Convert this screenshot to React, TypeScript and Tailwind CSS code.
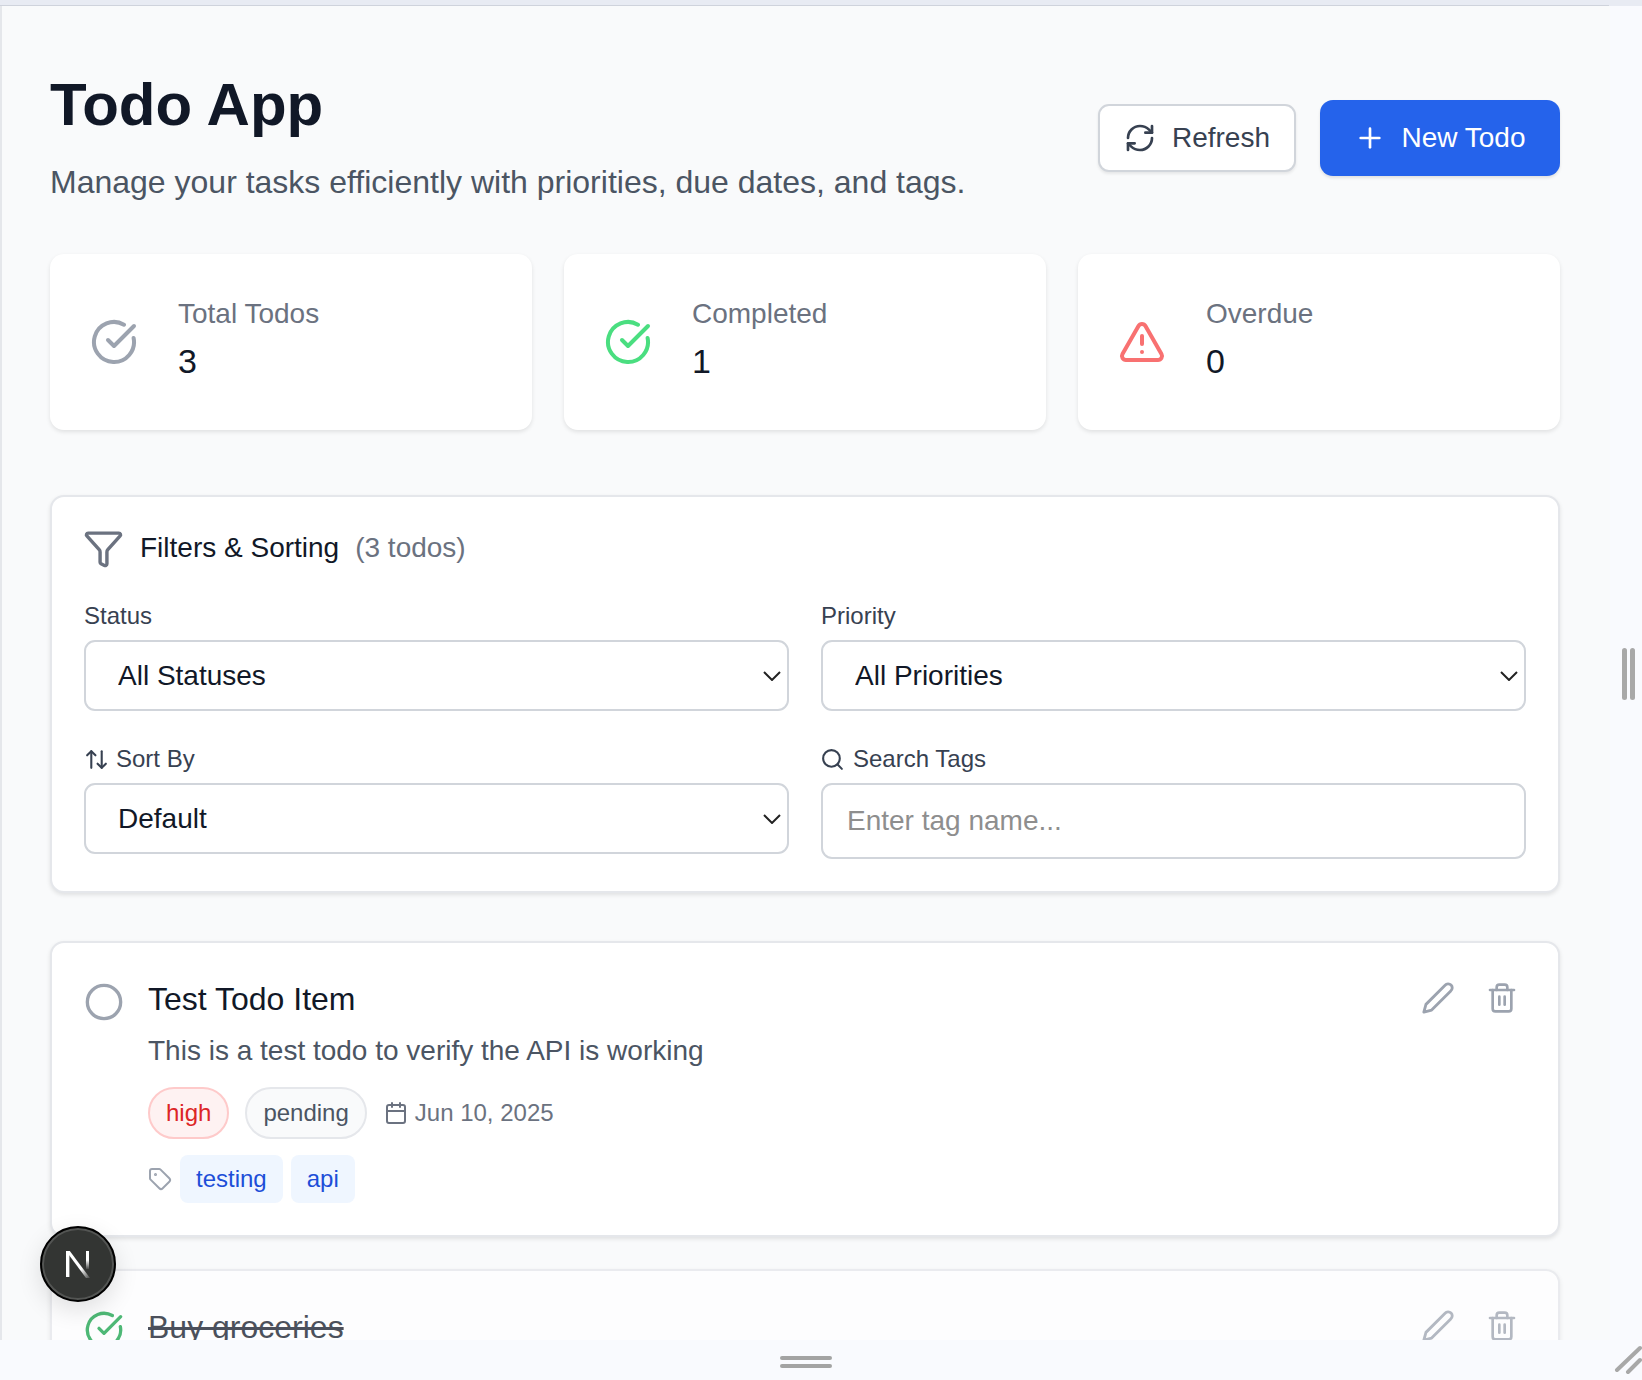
import { AlertTriangle, ArrowUpDown, Calendar, CheckCircle, Circle, Filter, Plus, RefreshCw, Search, Tag, Trash2 } from 'lucide-react';

const font = { fontFamily: '"Liberation Sans", Arial, sans-serif' };

function PencilIcon({ className }: { className?: string }) {
  return (
    <svg viewBox="0 0 24 24" fill="none" stroke="currentColor" strokeWidth="2" strokeLinecap="round" strokeLinejoin="round" className={className}>
      <path d="M17 3a2.85 2.83 0 1 1 4 4L7.5 20.5 2 22l1.5-5.5Z" />
    </svg>
  );
}

function RowActions() {
  return (
    <div className="mt-[3px] flex items-center gap-[31px] self-start">
      <PencilIcon className="h-[34px] w-[34px] text-[#9ca3af]" />
      <Trash2 className="h-[32px] w-[32px] text-[#9ca3af]" />
    </div>
  );
}

function StatCard({ icon, label, value }: { icon: React.ReactNode; label: string; value: string }) {
  return (
    <div className="flex h-[176px] items-center gap-[40px] rounded-[14px] bg-white pl-[40px] shadow-[0_2px_4px_rgba(0,0,0,0.1)]">
      {icon}
      <div className="pb-[4px]">
        <p className="text-[28px] leading-[36px] text-[#6b7280]">{label}</p>
        <p className="mt-[5px] text-[34px] leading-[48px] text-[#111827]">{value}</p>
      </div>
    </div>
  );
}

function SelectField({ label, value, icon }: { label: string; value: string; icon?: React.ReactNode }) {
  return (
    <div>
      <label className="mb-[8px] flex h-[32px] items-center gap-[7px] text-[24px] leading-[32px] text-[#374151]">
        {icon}
        {label}
      </label>
      <div className="relative">
        <select className="h-[71px] w-full appearance-none rounded-[11px] border-2 border-[#d1d5db] bg-white pl-[32px] text-[28px] text-[#111827] outline-none">
          <option>{value}</option>
        </select>
        <svg viewBox="0 0 18 10" fill="none" stroke="#222222" strokeWidth="2" className="pointer-events-none absolute top-[31px] right-[8px] h-[10px] w-[18px]">
          <path d="M1 1l8 8 8-8" />
        </svg>
      </div>
    </div>
  );
}

function TodoCard() {
  return (
    <div className="flex rounded-[14px] border-2 border-[#e5e7eb] bg-white pt-[35px] pr-[40px] pb-[32px] pl-[32px] shadow-[0_2px_4px_rgba(0,0,0,0.1)]">
      <Circle className="mt-[4px] h-[40px] w-[40px] shrink-0 text-[#9ca3af]" />
      <div className="ml-[24px] flex-1">
        <h3 className="text-[32px] leading-[42px] text-[#111827]">Test Todo Item</h3>
        <p className="mt-[12px] text-[28px] leading-[38px] text-[#4b5563]">This is a test todo to verify the API is working</p>
        <div className="mt-[17px] flex items-center">
          <span className="flex h-[52px] items-center rounded-full border-2 border-[#fecaca] bg-[#fef2f2] px-[16px] text-[24px] text-[#dc2626]">high</span>
          <span className="ml-[16px] flex h-[52px] items-center rounded-full border-2 border-[#e5e7eb] bg-[#f9fafb] px-[16px] text-[24px] text-[#4b5563]">pending</span>
          <Calendar className="ml-[17px] h-[24px] w-[24px] text-[#6b7280]" />
          <span className="ml-[7px] text-[24px] text-[#6b7280]">Jun 10, 2025</span>
        </div>
        <div className="mt-[16px] flex items-center">
          <Tag className="h-[24px] w-[24px] text-[#9ca3af]" />
          <span className="ml-[8px] flex h-[48px] items-center rounded-[8px] bg-[#eff6ff] px-[16px] text-[24px] text-[#1d4ed8]">testing</span>
          <span className="ml-[8px] flex h-[48px] items-center rounded-[8px] bg-[#eff6ff] px-[16px] text-[24px] text-[#1d4ed8]">api</span>
        </div>
      </div>
      <RowActions />
    </div>
  );
}

function DoneCard() {
  return (
    <div className="mt-[32px] flex h-[200px] rounded-[14px] border-2 border-[#e5e7eb] bg-white pt-[35px] pr-[40px] pl-[32px] opacity-75 shadow-[0_2px_4px_rgba(0,0,0,0.1)]">
      <CheckCircle className="mt-[4px] h-[40px] w-[40px] shrink-0 text-[#16a34a]" />
      <div className="ml-[24px] flex-1">
        <h3 className="text-[32px] leading-[42px] text-[#111827] line-through">Buy groceries</h3>
      </div>
      <RowActions />
    </div>
  );
}

export default function App() {
  return (
    <div className="relative flex h-[1380px] w-[1642px] flex-col overflow-hidden bg-[#f9fafe]" style={font}>
      {/* browser chrome strip */}
      <div className="h-[6px] shrink-0 bg-[#e8ebf3]">
        <div className="h-[6px] w-[1609px] border-b border-[#cfd3dc]" />
      </div>

      <div className="flex min-h-0 flex-1">
        <main className="h-full w-[1610px] shrink-0 overflow-hidden border-l-2 border-[#e5e7eb] bg-[#f9fafb] pt-[66px] pl-[48px]">
          <div className="w-[1510px]">
            {/* header */}
            <div className="flex items-center justify-between">
              <div>
                <h1 className="text-[60px] leading-[66px] font-bold text-[#111827]">Todo App</h1>
                <p className="mt-[24px] pb-[1px] text-[32px] leading-[40px] text-[#4b5563]">Manage your tasks efficiently with priorities, due dates, and tags.</p>
              </div>
              <div className="flex items-center gap-[24px]">
                <button className="flex h-[68px] w-[198px] items-center justify-center gap-[16px] rounded-[11px] border-2 border-[#d1d5db] bg-white text-[28px] text-[#374151] shadow-[0_2px_3px_rgba(0,0,0,0.08)]">
                  <RefreshCw className="h-[32px] w-[32px]" />
                  Refresh
                </button>
                <button className="flex h-[76px] w-[240px] items-center justify-center gap-[15px] rounded-[13px] bg-[#2563eb] text-[28px] text-white shadow-[0_2px_3px_rgba(0,0,0,0.1)]">
                  <Plus className="h-[32px] w-[32px]" />
                  New Todo
                </button>
              </div>
            </div>

            {/* stats */}
            <div className="mt-[51px] grid grid-cols-3 gap-[32px]">
              <StatCard icon={<CheckCircle className="h-[48px] w-[48px] text-[#9ca3af]" />} label="Total Todos" value="3" />
              <StatCard icon={<CheckCircle className="h-[48px] w-[48px] text-[#4ade80]" />} label="Completed" value="1" />
              <StatCard icon={<AlertTriangle className="h-[48px] w-[48px] text-[#f87171]" />} label="Overdue" value="0" />
            </div>

            {/* filters */}
            <section className="mt-[65px] rounded-[14px] border-2 border-[#e5e7eb] bg-white px-[32px] pt-[29px] pb-[32px] shadow-[0_2px_4px_rgba(0,0,0,0.1)]">
              <div className="flex h-[44px] items-center">
                <Filter className="-ml-[1px] h-[41px] w-[41px] text-[#6b7280]" />
                <h2 className="ml-[16px] text-[28px] text-[#111827]">Filters &amp; Sorting</h2>
                <span className="ml-[16px] text-[28px] text-[#6b7280]">(3 todos)</span>
              </div>
              <div className="mt-[30px] grid grid-cols-2 items-start gap-x-[32px] gap-y-[32px]">
                <SelectField label="Status" value="All Statuses" />
                <SelectField label="Priority" value="All Priorities" />
                <SelectField label="Sort By" value="Default" icon={<ArrowUpDown className="h-[25px] w-[25px]" />} />
                <div>
                  <label className="mb-[8px] flex h-[32px] items-center gap-[8px] text-[24px] leading-[32px] text-[#374151]">
                    <Search className="-ml-[1px] h-[25px] w-[25px]" />
                    Search Tags
                  </label>
                  <input
                    placeholder="Enter tag name..."
                    className="h-[76px] w-full rounded-[11px] border-2 border-[#d1d5db] bg-white pl-[24px] text-[28px] outline-none placeholder:text-[#8e8e8e]"
                  />
                </div>
              </div>
            </section>

            {/* todos */}
            <div className="mt-[48px]">
              <TodoCard />
              <DoneCard />
            </div>
          </div>
        </main>

        {/* side resize handle */}
        <div className="flex flex-1 items-start justify-center pt-[642px] pl-[4px]">
          <div className="flex gap-[3px]">
            <div className="h-[52px] w-[5px] rounded-full bg-[#a8a8a8]" />
            <div className="h-[52px] w-[5px] rounded-full bg-[#a8a8a8]" />
          </div>
        </div>
      </div>

      {/* bottom resize handle */}
      <div className="flex h-[40px] shrink-0 flex-col items-center justify-center gap-[4px] pt-[4px] pr-[30px]">
        <div className="h-[4px] w-[52px] rounded-full bg-[#a3a3a3]" />
        <div className="h-[4px] w-[52px] rounded-full bg-[#a3a3a3]" />
      </div>

      {/* corner grip */}
      <svg viewBox="0 0 30 36" fill="none" stroke="#a8a8a8" strokeWidth="4" strokeLinecap="round" className="absolute right-0 bottom-0 h-[36px] w-[30px]">
        <path d="M5 26L28 4M16 28L28 16" />
      </svg>

      {/* dev indicator */}
      <div className="absolute top-[1226px] left-[40px] flex h-[76px] w-[76px] items-center justify-center rounded-full border-2 border-black bg-[#333533] shadow-[inset_0_0_0_2px_rgba(255,255,255,0.16),0_8px_24px_rgba(0,0,0,0.12)]">
        <svg viewBox="0 0 28 30" className="h-[30px] w-[28px]">
          <defs>
            <linearGradient id="nfade" x1="0" y1="0" x2="0" y2="1">
              <stop offset="0.5" stopColor="#ffffff" />
              <stop offset="1" stopColor="#ffffff" stopOpacity="0.1" />
            </linearGradient>
            <linearGradient id="ndiag" x1="0" y1="0" x2="1" y2="1">
              <stop offset="0.65" stopColor="#ffffff" />
              <stop offset="1" stopColor="#ffffff" stopOpacity="0.1" />
            </linearGradient>
          </defs>
          <path d="M2 2h3.4V28H2z" fill="#ffffff" />
          <path d="M2 2h3.8L26 29h-4z" fill="url(#ndiag)" />
          <rect x="22" y="2" width="3" height="18" fill="url(#nfade)" />
        </svg>
      </div>
    </div>
  );
}
